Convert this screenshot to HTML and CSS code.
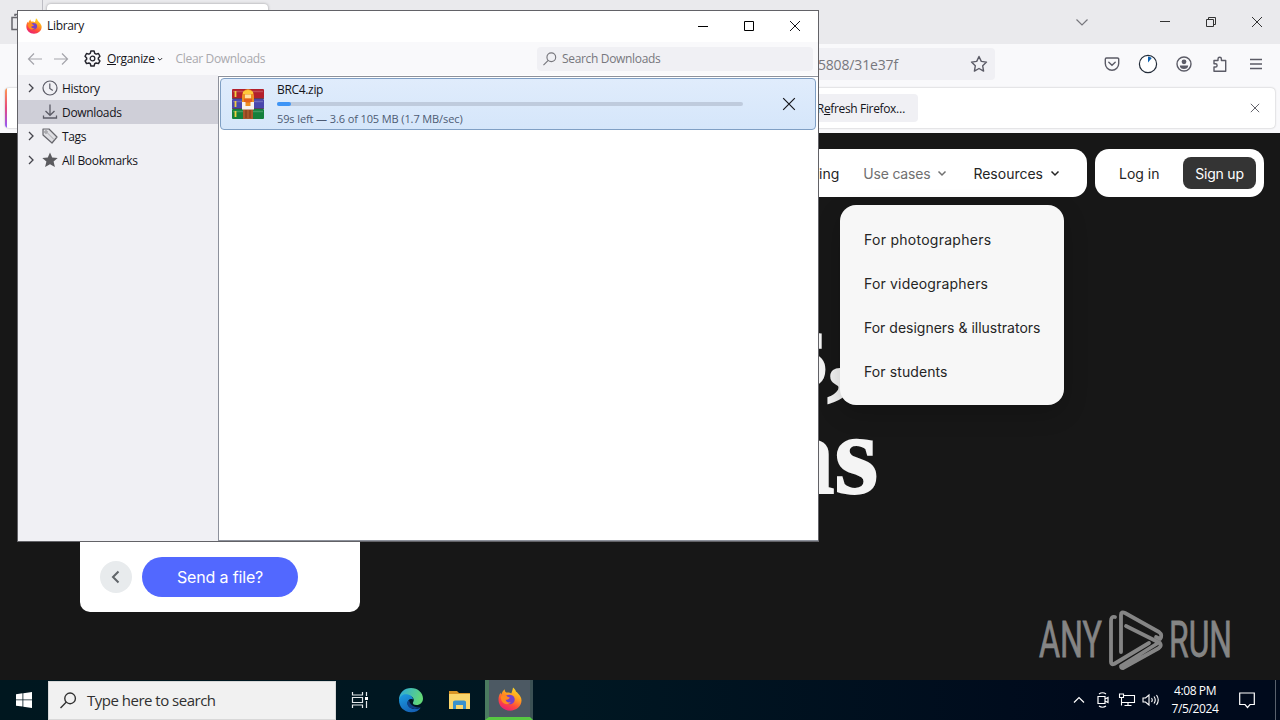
FILE: index.html
```html
<!DOCTYPE html>
<html lang="en">
<head>
<meta charset="UTF-8">
<meta name="viewport" content="width=device-width, initial-scale=1.0">
<title>Library</title>
<link rel="stylesheet" href="styles.css">
</head>
<body>
<!-- shared icons -->
<svg class="defs" width="0" height="0">
  <defs>
    <linearGradient id="flame" x1="0.8" y1="0" x2="0.3" y2="1">
      <stop offset="0" stop-color="#ffe226"/>
      <stop offset="0.4" stop-color="#ff9a1f"/>
      <stop offset="0.7" stop-color="#ff4a3c"/>
      <stop offset="1" stop-color="#e81e78"/>
    </linearGradient>
    <linearGradient id="edge-a" x1="0" y1="0" x2="1" y2="0.3">
      <stop offset="0" stop-color="#2aa6e0"/>
      <stop offset="1" stop-color="#62d878"/>
    </linearGradient>
    <linearGradient id="edge-b" x1="0" y1="0" x2="0.6" y2="1">
      <stop offset="0" stop-color="#1b9de2"/>
      <stop offset="1" stop-color="#1561b5"/>
    </linearGradient>
    <symbol id="firefox" viewBox="0 0 24 24">
      <path d="M15 0.5c1.6 1.2 2.6 2.7 3 4.3 0.9 0.2 1.7 0.9 2 1.8 2 2 3.5 4.300 3.500 7C23.500 19.200 18.300 23.700 12 23.700S0.500 19 0.500 12.800c0-2.700 0.700-5 2-7 0.200 0.800 0.500 1.300 0.900 1.800 0.400-2 1.500-4 3.300-5.400 0 1.500 0.500 2.600 1.600 3.400 2-0.500 3.900 0 5 0.800C14 4.600 14.800 2.600 15 0.500z" fill="url(#flame)"/>
      <path d="M8 8.500c3-1.600 7.500-0.900 8.500 2.500 0.900 3.700-1.700 6.400-5 6.300-3 0-5-2.300-4.500-5 1.200 0.700 3.500 0.500 4.500-1.300-1.300-0.300-2.800-1-3.500-2.500z" fill="#7542c9"/>
      <path d="M2.700 10c1.500-2.300 4-2.500 5.800-1.300 1 0.900 1.900 1.600 3.400 1.900-1 1.600-2.600 2-4.300 2.200 0.500 2.300 2.900 3.200 5.200 2.200-2 4-9.800 2.500-10.100-5z" fill="#ff8a20"/>
    </symbol>
    <symbol id="close" viewBox="0 0 12 12">
      <path d="M1 1l10 10M11 1L1 11" fill="none" stroke="currentColor"/>
    </symbol>
    <symbol id="down" viewBox="0 0 10 10">
      <path d="M1.500 3.500L5 7l3.500-3.500" fill="none" stroke="currentColor" stroke-width="1.500"/>
    </symbol>
    <symbol id="twisty" viewBox="0 0 10 10">
      <path d="M3 1l4 4-4 4" fill="none" stroke="currentColor" stroke-width="1.300"/>
    </symbol>
    <symbol id="glass" viewBox="0 0 16 16">
      <circle cx="9.500" cy="6" r="5" fill="none" stroke="currentColor" stroke-width="1.300"/>
      <path d="M6 9.500L0.500 15" fill="none" stroke="currentColor" stroke-width="1.300"/>
    </symbol>
  </defs>
</svg>

<div class="desktop">
  <!-- browser behind the library -->
  <div class="browser">
    <div class="tabbar">
      <svg class="tab-view" width="16" height="18" viewBox="0 0 16 18"><path d="M4 3V1.500h11M1 4.500h13v12H1z" fill="none" stroke="#66666c" stroke-width="1.500"/></svg>
      <span class="tab-sep"></span>
      <div class="tab"></div>
      <svg class="all-tabs" width="14" height="14" viewBox="0 0 14 14"><path d="M1.500 4.500L7 10l5.500-5.500" fill="none" stroke="#77777d" stroke-width="1.200"/></svg>
      <div class="win-buttons">
        <span><svg width="12" height="12" viewBox="0 0 12 12"><path d="M1 5.500h10" stroke="#333"/></svg></span>
        <span><svg width="12" height="12" viewBox="0 0 12 12"><path d="M1.500 3.500h7v7h-7zM3.500 3.500v-2h7v7h-2" fill="none" stroke="#333"/></svg></span>
        <span><svg width="12" height="12"><use href="#close"/></svg></span>
      </div>
    </div>
    <div class="navbar">
      <div class="urlbar">
        <span class="url">5808/31e37f</span>
        <svg width="18" height="18" viewBox="0 0 18 18"><path d="M9 1.500l2.300 4.900 5.200 0.700-3.800 3.700 0.900 5.300L9 13.500l-4.600 2.600 0.900-5.300L1.500 7.100l5.200-0.700z" fill="none" stroke="#5b5b66" stroke-width="1.400" stroke-linejoin="round"/></svg>
      </div>
      <div class="tools">
        <span><svg width="16" height="16" viewBox="0 0 16 16"><path d="M2.500 2h11a1.200 1.200 0 0 1 1.200 1.200V7.500a6.700 6.700 0 0 1-13.400 0V3.200A1.200 1.200 0 0 1 2.500 2zM4.800 6.200L8 9.200l3.200-3" fill="none" stroke="#5b5b66" stroke-width="1.400" stroke-linecap="round"/></svg></span>
        <span><svg width="20" height="20" viewBox="0 0 20 20"><circle cx="10" cy="10" r="8.600" fill="#fff" stroke="#222b38" stroke-width="1.200"/><path d="M10 8.500V2.500a7.500 7.500 0 0 1 3.800 1.500z" fill="#0f62b0"/></svg></span>
        <span><svg width="16" height="16" viewBox="0 0 16 16"><circle cx="8" cy="8" r="7" fill="none" stroke="#5b5b66" stroke-width="1.400"/><circle cx="8" cy="5.800" r="2.400" fill="#5b5b66"/><path d="M3.800 9.400h8.400c0 2.200-1.800 3.600-4.200 3.600s-4.200-1.400-4.200-3.600z" fill="#5b5b66"/></svg></span>
        <span><svg width="16" height="16" viewBox="0 0 16 16"><path d="M2 15.200V11h1.500a1.600 1.600 0 1 0 0-3.200H2V4.500h4V3a1.700 1.700 0 0 1 3.400 0v1.500h4.300v10.700z" fill="none" stroke="#5b5b66" stroke-width="1.400" stroke-linejoin="round"/></svg></span>
        <span><svg width="14" height="12" viewBox="0 0 14 12"><path d="M1 1.500h12M1 6h12M1 10.500h12" stroke="#5b5b66" stroke-width="1.400"/></svg></span>
      </div>
    </div>
    <div class="notice">
      <button class="refresh">R<u>e</u>fresh Firefox…</button>
      <svg class="notice-close" width="10" height="10"><use href="#close"/></svg>
    </div>

    <div class="page">
      <div class="page-header">
        <nav class="menu">
          <a>Pricing</a>
          <a class="open">Use cases <svg width="10" height="10"><use href="#down"/></svg></a>
          <a>Resources <svg width="10" height="10"><use href="#down"/></svg></a>
        </nav>
        <div class="account">
          <a class="login">Log in</a>
          <a class="signup">Sign up</a>
        </div>
      </div>
      <h1 class="hero"><span class="line1">s,</span><span class="line2">as</span></h1>
      <div class="submenu">
        <a class="photo">For photographers</a>
        <a class="video">For videographers</a>
        <a>For designers &amp; illustrators</a>
        <a class="students">For students</a>
      </div>
      <div class="transfer">
        <span class="back"><svg width="12" height="16" viewBox="0 0 12 16"><path d="M8.500 2.500L3 8l5.500 5.500" fill="none" stroke="#5f6468" stroke-width="2"/></svg></span>
        <button class="send">Send a file?</button>
      </div>
      <svg class="watermark" width="206" height="64" viewBox="0 0 206 64">
        <g fill="#858585" stroke="#858585" stroke-width="0.800">
          <text x="2" y="49" textLength="63" lengthAdjust="spacingAndGlyphs">ANY</text>
          <text x="132" y="49" textLength="63" lengthAdjust="spacingAndGlyphs">RUN</text>
        </g>
        <g fill="none" stroke="#858585" stroke-width="3.800" stroke-linejoin="round" stroke-linecap="round">
          <path d="M78 9q-4-1-4 4v41q0 3 3 2l35-21"/>
          <path d="M84 44V7q0-4 4-2l34 19q4 3 1 7l-4-2"/>
          <path d="M89 18l34 17q2 3-1 5L86 60q-2 0-2-2l37-23"/>
        </g>
      </svg>
    </div>
  </div>

  <!-- downloads library -->
  <div class="library">
    <div class="titlebar">
      <svg width="16" height="16"><use href="#firefox"/></svg>
      <span class="title">Library</span>
      <div class="win-buttons">
        <span><svg width="12" height="12" viewBox="0 0 12 12"><path d="M1 6.500h10" stroke="#000"/></svg></span>
        <span><svg width="12" height="12" viewBox="0 0 12 12"><path d="M1.500 1.500h9v9h-9z" fill="none" stroke="#000"/></svg></span>
        <span><svg width="12" height="12"><use href="#close"/></svg></span>
      </div>
    </div>
    <div class="toolbar">
      <svg class="arrow" width="16" height="14" viewBox="0 0 16 14"><path d="M15 7H1.500M7 1.500L1.500 7 7 12.500" fill="none" stroke="#a5a5ab" stroke-width="1.200"/></svg>
      <svg class="arrow" width="16" height="14" viewBox="0 0 16 14"><path d="M1 7h13.500M9 1.500L14.500 7 9 12.500" fill="none" stroke="#a5a5ab" stroke-width="1.200"/></svg>
      <svg class="gear" width="17" height="17" viewBox="0 0 16 16"><path d="M6.500 1h3l0.600 2.200 1.300 0.700 2.200-0.600L15 5.900l-1.500 1.600v1.200L15 10.300l-1.400 2.500-2.200-0.600-1.300 0.700L9.500 15h-3l-0.600-2.100-1.300-0.700-2.200 0.600L1 10.300l1.500-1.600V7.500L1 5.900l1.400-2.600 2.200 0.600 1.300-0.700z" fill="none" stroke="#25252e" stroke-width="1.400" stroke-linejoin="round"/><circle cx="8" cy="8" r="2.200" fill="none" stroke="#25252e" stroke-width="1.200"/></svg>
      <span class="organize"><u>O</u>rganize</span>
      <svg class="organize-arrow" width="6" height="6"><use href="#down"/></svg>
      <span class="clear">Clear Downloads</span>
      <div class="search">
        <svg width="14" height="14"><use href="#glass"/></svg>
        <span>Search Downloads</span>
      </div>
    </div>
    <div class="content">
      <div class="places">
        <div class="place">
          <svg class="twisty" width="10" height="10"><use href="#twisty"/></svg>
          <svg width="16" height="16" viewBox="0 0 16 16"><circle cx="8" cy="8" r="7" fill="none" stroke="#5b5b66" stroke-width="1.200"/><path d="M7.800 3.500V8.500l3 2" fill="none" stroke="#5b5b66" stroke-width="1.200"/></svg>
          <span>History</span>
        </div>
        <div class="place selected">
          <span class="twisty"></span>
          <svg width="16" height="16" viewBox="0 0 16 16"><path d="M8 0.500v10.500M3.500 7L8 11.300 12.500 7M1.500 11.500V14h13v-2.500" fill="none" stroke="#5b5b66" stroke-width="1.300"/></svg>
          <span>Downloads</span>
        </div>
        <div class="place">
          <svg class="twisty" width="10" height="10"><use href="#twisty"/></svg>
          <svg width="16" height="16" viewBox="0 0 16 16"><path d="M1 1h6l8 8-5 6L1 7z" fill="#dedee2" stroke="#66666c" stroke-width="1.200" stroke-linejoin="round"/><path d="M5.500 5l6.500 6.500" stroke="#a5a5aa" stroke-width="1"/><circle cx="4" cy="4" r="1.200" fill="#fff" stroke="#66666c" stroke-width="0.800"/></svg>
          <span>Tags</span>
        </div>
        <div class="place">
          <svg class="twisty" width="10" height="10"><use href="#twisty"/></svg>
          <svg width="16" height="16" viewBox="0 0 16 16"><path d="M8 0.500l2.200 4.900 5.500 0.500-4.100 3.600 1.300 5.500L8 12.200 3.100 15l1.300-5.500L0.300 5.900l5.500-0.500z" fill="#5b5b5f"/></svg>
          <span>All Bookmarks</span>
        </div>
      </div>
      <div class="list">
        <div class="download">
          <svg class="archive" width="34" height="34" viewBox="0 0 34 34">
            <rect x="1" y="2" width="32" height="9.500" rx="1" fill="#b3202c"/>
            <rect x="1" y="12" width="32" height="9.500" rx="1" fill="#4a47ad"/>
            <rect x="1" y="22" width="32" height="10" rx="1" fill="#14803c"/>
            <path d="M2 4.500h30M2 24.500h30M2 14.500h30" stroke="#fff" stroke-opacity="0.200" stroke-width="1.500"/>
            <path d="M1 11.500h32M1 21.500h32" stroke="#3a2030" stroke-opacity="0.700"/>
            <path d="M4.500 4v6M4.500 14v6M4.500 24v6" stroke="#f0cf40" stroke-width="1.800"/>
            <rect x="12" y="22" width="10" height="10" fill="#a9562a"/>
            <path d="M15 23v8M19 23v8" stroke="#7d3518"/>
            <path d="M11 20V9q0-6 6-7 6 1 6 7v11z" fill="#ee8f22"/>
            <path d="M12 5q5-4 10 0v2H12z" fill="#ffc93a"/>
            <path d="M14 7.500h6v4h-6z" fill="#ffe0a0"/>
            <path d="M13 11.500h8v4h-8z" fill="#e2601c"/>
            <path d="M11 15h3.500v4h5v-4H23v7.500H11z" fill="#f6f2f0"/>
          </svg>
          <div class="info">
            <div class="name">BRC4.zip</div>
            <div class="progress"><div class="bar" style="width: 3.1%"></div></div>
            <div class="status">59s left — 3.6 of 105 MB (1.7 MB/sec)</div>
          </div>
          <svg class="cancel" width="14" height="14"><use href="#close"/></svg>
        </div>
      </div>
    </div>
  </div>

  <div class="taskbar">
    <div class="start"><svg width="16" height="16" viewBox="0 0 16 16"><path d="M0 2.200L6.500 1.300V7.500H0zM7.300 1.200L16 0v7.500H7.300zM0 8.300h6.500v6.300L0 13.700zM7.300 8.300H16V16l-8.700-1.200z" fill="#fff"/></svg></div>
    <div class="task-search"><svg width="17" height="17"><use href="#glass"/></svg><span>Type here to search</span></div>
    <div class="task"><svg width="18" height="18" viewBox="0 0 18 18"><path d="M1.500 1v3h10V1M1.500 17v-3h10v3M1.500 6.500h10v5h-10zM15.500 1v4M15.500 10v7" fill="none" stroke="#e4e9ec" stroke-width="1.200"/><rect x="14" y="6" width="3" height="3" fill="#fff"/></svg></div>
    <div class="task edge">
      <svg width="26" height="26" viewBox="0 0 26 26">
        <path d="M1 13C1 5.500 6.500 1 13 1c7 0 12 5 12 10.500 0 4-3 6.500-6.500 6.500-3 0-4-1.500-3.500-2.500 2-3 0-6.500-4-6.500C6 9 2 11 1 13z" fill="url(#edge-a)"/>
        <path d="M1 13C2 8.500 6 6.500 10 7.500c3.500 0.800 5 3 5 5-3-1.500-5.500 0.500-5.500 3.500 0 4 4.500 6.500 9 6 2-0.300 3.300-1 4.300-1.500C20.500 24 17 25.500 13 25.300 6 25 1 20 1 13z" fill="url(#edge-b)"/>
        <path d="M11 13c-1.500 1-2 3-1.500 4.500 1 4 7 6 13 3 -5 0-10.500-1.500-11.500-7.500z" fill="#103f86"/>
      </svg>
    </div>
    <div class="task files"><svg width="24" height="22" viewBox="0 0 24 22"><path d="M1 2h8l2 2h11v3H1z" fill="#d99526"/><path d="M1 5h21v15H1z" fill="#fbd66c"/><path d="M5 20v-7q0-1.500 2-1.500h9q2 0 2 1.500v7h-3v-4H8v4z" fill="#3a91cc"/></svg></div>
    <div class="task active"><svg width="24" height="24"><use href="#firefox"/></svg></div>
    <div class="tray">
      <span><svg width="12" height="12" viewBox="0 0 12 12"><path d="M1 8.500l5-5 5 5" fill="none" stroke="#fff" stroke-width="1.200"/></svg></span>
      <span><svg width="14" height="18" viewBox="0 0 14 18"><path d="M2 5.500h7v7H2zM9 8l3-1.500v5L9 10M3 3q3.500-2.500 7 0M3 15q3.500 2.500 7 0" fill="none" stroke="#fff" stroke-width="1.200"/></svg></span>
      <span><svg width="18" height="16" viewBox="0 0 18 16"><path d="M5.500 3.500h11v7H4M10 10.500v3M6.500 13.500h7M1.500 2h4v3.500h-4zM3.500 5.500v8" fill="none" stroke="#fff" stroke-width="1.100"/></svg></span>
      <span><svg width="18" height="16" viewBox="0 0 18 16"><path d="M1 6h2.500L7 3v10l-3.500-3H1zM9.500 6q1.500 2 0 4M12 4.500q2.500 3.500 0 7M14.500 3q3.500 5 0 10" fill="none" stroke="#fff" stroke-width="1.100"/></svg></span>
    </div>
    <div class="clock"><span class="time">4:08 PM</span><span class="date">7/5/2024</span></div>
    <svg class="action" width="16" height="17" viewBox="0 0 16 17"><path d="M0.700 1h14.600v11.500H11L8.500 15.500 6 12.500H0.700z" fill="none" stroke="#fff" stroke-width="1.200"/></svg>
    <span class="peek"></span>
  </div>
</div>
</body>
</html>
```
FILE: styles.css
```css
* {
  box-sizing: border-box;
}

body {
  margin: 0;
  overflow: hidden;
  font-family: "Open Sans", "Noto Sans", sans-serif;
  font-size: 12px;
  color: #15141a;
}

svg {
  display: block;
  flex: none;
}

button {
  border: 0;
  font: inherit;
}

.defs {
  position: absolute;
}

.desktop {
  position: relative;
  width: 1280px;
  height: 720px;
  overflow: hidden;
}

.win-buttons {
  display: flex;
  margin-left: auto;
}

.win-buttons span {
  width: 46px;
  display: flex;
  align-items: center;
  justify-content: center;
}

/* browser */
.browser {
  height: 680px;
  display: flex;
  flex-direction: column;
  background: #f9f9fb;
}

.tabbar {
  height: 44px;
  display: flex;
  align-items: center;
  background: #eaeaed;
}

.tab-view {
  margin-left: 11px;
}

.tab-sep {
  width: 1px;
  height: 44px;
  margin: 0 4px 0 15px;
  background: #bdbdc4;
}

.tab {
  width: 221px;
  height: 36px;
  border-radius: 4px;
  background: #fff;
  box-shadow: 0 0 3px rgba(0, 0, 0, 0.35);
}

.all-tabs {
  margin-left: auto;
}

.tabbar .win-buttons {
  height: 44px;
  margin-left: 53px;
  color: #333;
}

.navbar {
  height: 40px;
  display: flex;
  align-items: center;
  justify-content: flex-end;
}

.urlbar {
  width: 800px;
  height: 32px;
  display: flex;
  align-items: center;
  justify-content: flex-end;
  padding-right: 7px;
  border-radius: 4px;
  background: #f0f0f4;
}

.url {
  margin-right: 72px;
  font-size: 14px;
  letter-spacing: -0.15px;
  color: #77777d;
}

.tools {
  display: flex;
  margin: 0 6px 0 99px;
}

.tools span {
  width: 36px;
  display: flex;
  align-items: center;
  justify-content: center;
}

.notice {
  height: 40px;
  margin: 4px 5px 0;
  display: flex;
  align-items: center;
  border-radius: 4px;
  background: linear-gradient(#ff9a50, #e6487f 50%, #9059ff) left / 2px 100% no-repeat #fff;
  box-shadow: 0 0 2px rgba(0, 0, 0, 0.3);
}

.refresh {
  width: 115px;
  height: 28px;
  margin-left: 798px;
  padding: 0 13px 0 0;
  border-radius: 4px;
  background: #f0f0f4;
  color: #15141a;
  text-align: right;
  letter-spacing: -0.35px;
}

.notice-close {
  margin-left: auto;
  margin-right: 15px;
  color: #45454d;
}

/* web page */
.page {
  position: relative;
  flex: 1;
  margin-top: 5px;
  background: #171717;
  font-family: Inter, "Liberation Sans", sans-serif;
  font-size: 14px;
  color: #252525;
}

.page-header {
  display: flex;
  justify-content: flex-end;
  gap: 8px;
  padding: 16px 16px 0;
}

.menu,
.account {
  height: 48px;
  display: flex;
  align-items: center;
  border-radius: 14px;
  background: #fff;
}

.menu {
  padding: 0 27px 0 24px;
  gap: 26px;
}

.menu a {
  display: flex;
  align-items: center;
  gap: 7px;
}

.menu a:first-child {
  margin-right: -2px;
}

.menu .open {
  color: #707070;
  letter-spacing: -0.2px;
}

.account {
  width: 169px;
  padding: 0 8px 0 24px;
  justify-content: space-between;
}

.signup {
  width: 73px;
  height: 32px;
  line-height: 33px;
  border-radius: 8px;
  background: #343434;
  color: #fff;
  text-align: center;
  letter-spacing: -0.2px;
}

.hero {
  position: absolute;
  top: 162px;
  left: 700px;
  width: 178px;
  margin: 0;
  display: flex;
  flex-direction: column;
  align-items: flex-end;
  font: bold 112px/107px "Liberation Serif", serif;
  color: #f4f4f4;
  -webkit-text-stroke: 2px #f4f4f4;
}

.line1 {
  margin-right: 23px;
}

.submenu {
  position: absolute;
  top: 72px;
  left: 840px;
  width: 224px;
  height: 200px;
  padding: 13px 24px;
  border-radius: 16px;
  background: #f7f7f7;
  box-shadow: 0 8px 24px rgba(0, 0, 0, 0.2);
}

.submenu a {
  display: block;
  line-height: 44px;
  white-space: nowrap;
}

.submenu .photo {
  letter-spacing: 0.27px;
}

.submenu .video {
  letter-spacing: 0.18px;
}

.submenu .students {
  letter-spacing: 0.1px;
}

.transfer {
  position: absolute;
  left: 80px;
  bottom: 68px;
  width: 280px;
  height: 100px;
  padding: 0 20px 15px;
  display: flex;
  align-items: flex-end;
  gap: 10px;
  border-radius: 10px;
  background: #fff;
}

.back {
  width: 32px;
  height: 32px;
  margin-bottom: 4px;
  display: flex;
  align-items: center;
  justify-content: center;
  border-radius: 50%;
  background: #e8ebed;
}

.send {
  width: 156px;
  height: 40px;
  padding-bottom: 2px;
  border-radius: 20px;
  background: #5268ff;
  color: #fff;
  font-size: 16px;
  letter-spacing: -0.15px;
}

.watermark {
  position: absolute;
  top: 475px;
  left: 1037px;
}

.watermark text {
  font: 50px Roboto, sans-serif;
}

/* library window */
.library {
  position: absolute;
  top: 10px;
  left: 17px;
  width: 802px;
  height: 532px;
  display: flex;
  flex-direction: column;
  border: 1px solid #626267;
  background: #fff;
  letter-spacing: -0.33px;
}

.titlebar {
  height: 31px;
  display: flex;
  align-items: center;
  padding: 0 0 2px 8px;
}

.title {
  margin-left: 5px;
}

.titlebar .win-buttons {
  height: 29px;
}

.toolbar {
  height: 33px;
  display: flex;
  align-items: center;
  padding: 0 5px 0 9px;
  background: #f9f9fb;
}

.arrow {
  margin-right: 10px;
}

.gear {
  margin: 0 6px 0 5px;
}

.organize-arrow {
  margin: 0 13px 0 2px;
}

.clear {
  color: #a9a9ae;
}

.search {
  width: 276px;
  height: 24px;
  margin-left: auto;
  padding-left: 6px;
  display: flex;
  align-items: center;
  gap: 5px;
  border-radius: 4px;
  background: #f0f0f4;
  color: #77777d;
}

.content {
  flex: 1;
  display: flex;
}

.places {
  width: 200px;
  padding-top: 1px;
  background: #f0f0f4;
}

.place {
  height: 24px;
  display: flex;
  align-items: center;
  gap: 4px;
  padding-left: 8px;
}

.place .twisty {
  width: 10px;
  margin-right: 2px;
  color: #45454d;
}

.selected {
  background: #cfcfd8;
}

.list {
  flex: 1;
  margin-top: 1px;
  padding: 1px;
  border: 1px solid #8d919b;
  border-right: 0;
}

.download {
  width: 596px;
  height: 52px;
  display: flex;
  align-items: center;
  padding: 0 19px 0 10px;
  border: 1px solid #7f9fc4;
  border-radius: 4px;
  background: linear-gradient(#e0ecfc, #d5e6fa);
}

.info {
  width: 466px;
  margin-left: 12px;
}

.name {
  line-height: 16px;
}

.progress {
  height: 4px;
  margin: 4px 0 5px;
  border-radius: 2px;
  background: #bfcbdd;
}

.bar {
  height: 4px;
  border-radius: 2px;
  background: #3d94f6;
}

.status {
  font-size: 11px;
  line-height: 16px;
  letter-spacing: -0.11px;
  color: #4d5b73;
}

.cancel {
  margin-left: auto;
}

/* taskbar */
.taskbar {
  height: 40px;
  display: flex;
  align-items: center;
  background: linear-gradient(90deg, #00171f, #001722 45%, #000a1c 85%);
  color: #fff;
}

.start,
.task {
  width: 48px;
  height: 40px;
  display: flex;
  align-items: center;
  justify-content: center;
}

.task {
  margin-right: 2px;
}

.task.edge {
  margin-left: 1px;
  margin-right: 1px;
}

.task.files {
  margin-right: 1px;
}

.task-search {
  width: 288px;
  height: 39px;
  display: flex;
  align-items: center;
  padding-left: 11px;
  gap: 10px;
  border: 1px solid #d8d8d8;
  background: #f1f1f1;
  color: #303030;
  font-size: 15px;
  letter-spacing: -0.5px;
}

.active {
  border-bottom: 3px solid #57c842;
  border-left: 4px solid #4b7b60;
  border-right: 3px solid #3b5154;
  background: #4c5963;
}

.tray {
  display: flex;
  margin-left: auto;
}

.tray span {
  width: 24px;
  display: flex;
  align-items: center;
  justify-content: center;
}

.clock {
  width: 50px;
  margin: 0 19px 0 7px;
  display: flex;
  flex-direction: column;
  align-items: center;
  line-height: 18px;
  white-space: nowrap;
  letter-spacing: -0.4px;
}

.peek {
  width: 1px;
  height: 40px;
  margin: 0 4px 0 20px;
  background: #59616d;
}
```
